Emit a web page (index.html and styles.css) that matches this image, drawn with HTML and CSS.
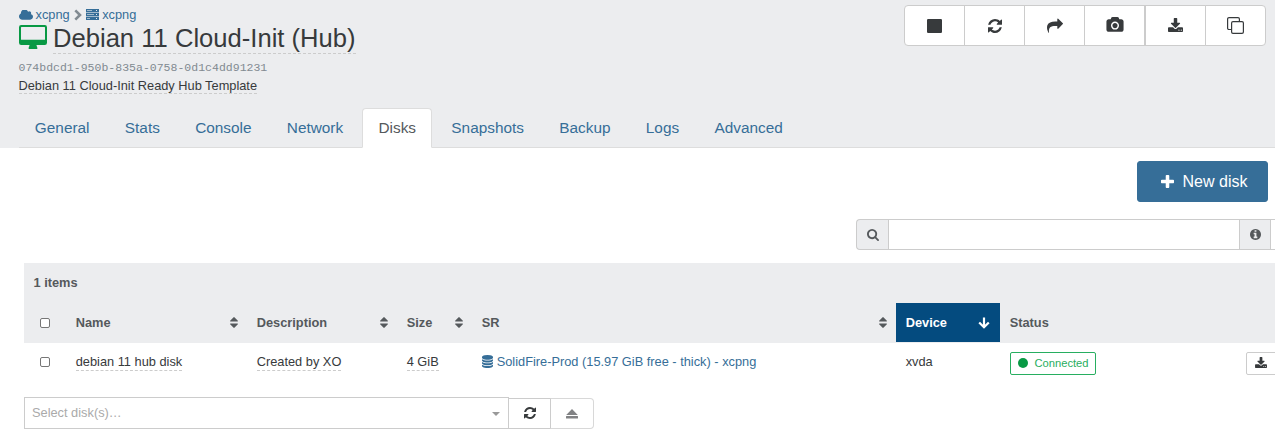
FILE: index.html
```
<!DOCTYPE html>
<html lang="en">
<head>
<meta charset="utf-8">
<title>Debian 11 Cloud-Init (Hub)</title>
<link rel="stylesheet" href="styles.css">
</head>
<body>
<svg class="defs" width="0" height="0">
  <symbol id="refresh" viewBox="0 0 1536 1536"><path d="M1511 928q0 5-1 7-64 268-268 434.500t-478 166.500q-146 0-282.500-55t-243.500-157l-129 129q-19 19-45 19t-45-19-19-45v-448q0-26 19-45t45-19h448q26 0 45 19t19 45-19 45l-137 137q71 66 161 102t187 36q134 0 250-65t186-179q11-17 53-117 8-23 30-23h192q13 0 22.500 9.500t9.500 22.500zm25-800v448q0 26-19 45t-45 19h-448q-26 0-45-19t-19-45 19-45l138-138q-148-137-349-137-134 0-250 65t-186 179q-11 17-53 117-8 23-30 23h-199q-13 0-22.500-9.500t-9.500-22.500v-7q65-268 270-434.500t480-166.500q146 0 284 55.500t245 156.500l130-129q19-19 45-19t45 19 19 45z"/></symbol>
  <symbol id="download" viewBox="64 0 1664 1536"><path d="M1344 1344q0-26-19-45t-45-19-45 19-19 45 19 45 45 19 45-19 19-45zm256 0q0-26-19-45t-45-19-45 19-19 45 19 45 45 19 45-19 19-45zm128-224v320q0 40-28 68t-68 28h-1472q-40 0-68-28t-28-68v-320q0-40 28-68t68-28h465l135 136q58 56 136 56t136-56l136-136h464q40 0 68 28t28 68zm-325-569q17 41-14 70l-448 448q-18 19-45 19t-45-19l-448-448q-31-29-14-70 17-39 59-39h256v-448q0-26 19-45t45-19h256q26 0 45 19t19 45v448h256q42 0 59 39z"/></symbol>
  <symbol id="sort" viewBox="384 192 1024 1408"><path d="M1408 1088q0 26-19 45l-448 448q-19 19-45 19t-45-19l-448-448q-19-19-19-45t19-45 45-19h896q26 0 45 19t19 45zm0-384q0 26-19 45t-45 19h-896q-26 0-45-19t-19-45 19-45l448-448q19-19 45-19t45 19l448 448q19 19 19 45z"/></symbol>
</svg>

<header class="header">
  <div class="heading">
    <nav class="crumbs">
      <svg class="cloud" viewBox="-64 256 1920 1280"><path d="M1856 1152q0 159-112.500 271.500t-271.500 112.500h-1088q-185 0-316.500-131.500t-131.500-316.500q0-132 71-241.500t187-163.500q-2-28-2-43 0-212 150-362t362-150q158 0 286.500 88t187.500 230q70-62 166-62 106 0 181 75t75 181q0 75-41 138 129 30 213 134.500t84 239.500z"/></svg>
      <a>xcpng</a>
      <svg class="chevron" viewBox="0 0 8 12"><path d="M1.300 1.300 6 6l-4.700 4.700"/></svg>
      <svg class="server" viewBox="0 0 13 11"><path fill-rule="evenodd" d="M0 0h13v3H0zM1 1v1h5V1zM10 1v1h1V1zM0 4h13v3H0zM1 5v1h7V5zM10 5v1h1V5zM0 8h13v3H0zM1 9v1h3V9zM10 9v1h1V9z"/><path class="shade" d="M1 1h5v1H1zM1 5h7v1H1zM1 9h3v1H1zM0 3h13v1H0zM0 7h13v1H0z"/></svg>
      <a>xcpng</a>
    </nav>
    <h1 class="title">
      <svg class="monitor" viewBox="0 0 28 24"><path fill-rule="evenodd" d="M2.200 0h23.600Q28 0 28 2.200v15.600q0 2.200-2.200 2.200H17.500q0 1 .7 2.200.8 1.800-.4 1.800h-7.600q-1.200 0-.4-1.800.7-1.200.7-2.200H2.200Q0 20 0 17.800V2.200Q0 0 2.200 0zM2 2.400v12q0 .4.400.4h23.200q.4 0 .4-.4v-12q0-.4-.4-.4H2.400Q2 2 2 2.400z"/></svg>
      <span class="editable">Debian 11 Cloud-Init (Hub)</span>
    </h1>
    <div class="uuid">074bdcd1-950b-835a-0758-0d1c4dd91231</div>
    <div class="summary"><span class="editable">Debian 11 Cloud-Init Ready Hub Template</span></div>
  </div>
  <div class="actions">
    <button><svg class="stop" viewBox="0 0 15 14"><path d="M.8 0h13.400l.8.800v12.400l-.8.800H.8L0 13.200V.8z"/></svg></button>
    <button><svg class="i14"><use href="#refresh"/></svg></button>
    <button><svg class="i16" viewBox="0 0 1792 1792"><path d="M1792 640q0 26-19 45l-512 512q-19 19-45 19t-45-19-19-45v-256h-224q-98 0-175.500 6t-154 21.500-133 42.500-105.500 69.500-80 101-48.500 138.500-17.500 181q0 55 5 123 0 6 2.500 23.500t2.500 26.500q0 15-8.500 25t-23.500 10q-16 0-28-17-7-9-13-22t-13.500-30-10.500-24q-127-285-127-451 0-199 53-333 162-403 875-403h224v-256q0-26 19-45t45-19 45 19l512 512q19 19 19 45z"/></svg></button>
    <button><svg class="camera" viewBox="-64 0 1920 1792"><path d="M896 672q119 0 203.500 84.500t84.500 203.500-84.500 203.500-203.500 84.500-203.500-84.500-84.500-203.500 84.500-203.500 203.500-84.500zm704-416q106 0 181 75t75 181v896q0 106-75 181t-181 75h-1408q-106 0-181-75t-75-181v-896q0-106 75-181t181-75h224l51-136q19-49 69.500-84.500t103.500-35.500h512q53 0 103.500 35.500t69.500 84.500l51 136h224zm-704 1152q185 0 316.500-131.500t131.500-316.500-131.500-316.500-316.500-131.500-316.500 131.500-131.500 316.500 131.500 316.500 316.500 131.500z"/></svg></button>
    <button class="thick"><svg class="save"><use href="#download"/></svg></button>
    <button><svg class="clone" viewBox="0 0 17 17"><path d="M4.500 12.500H2A1.400 1.400 0 0 1 .6 11V2A1.400 1.400 0 0 1 2 .6h9A1.400 1.400 0 0 1 12.400 2v2.500"/><rect x="4.600" y="4.600" width="11.800" height="11.800" rx="1.400"/></svg></button>
  </div>
  <nav class="tabs">
    <a>General</a><a>Stats</a><a>Console</a><a>Network</a><a class="active">Disks</a><a>Snapshots</a><a>Backup</a><a>Logs</a><a>Advanced</a>
  </nav>
</header>

<main>
  <div class="toolbar"><button class="new-disk"><svg viewBox="192 128 1408 1408"><path d="M1600 736v192q0 40-28 68t-68 28h-416v416q0 40-28 68t-68 28h-192q-40 0-68-28t-28-68v-416h-416q-40 0-68-28t-28-68v-192q0-40 28-68t68-28h416v-416q0-40 28-68t68-28h192q40 0 68 28t28 68v416h416q40 0 68 28t28 68z"/></svg>New disk</button></div>
  <div class="filter">
    <span class="addon first"><svg viewBox="64 128 1664 1664"><path d="M1216 832q0-185-131.500-316.500t-316.500-131.500-316.500 131.500-131.500 316.500 131.500 316.500 316.500 131.500 316.500-131.500 131.500-316.500zm512 832q0 52-38 90t-90 38q-54 0-90-38l-343-342q-179 124-399 124-143 0-273.500-55.500t-225-150-150-225-55.500-273.500 55.500-273.500 150-225 225-150 273.500-55.500 273.500 55.500 225 150 150 225 55.500 273.500q0 220-124 399l343 343q37 37 37 90z"/></svg></span>
    <input type="text" class="search">
    <span class="addon info"><svg viewBox="128 128 1536 1536"><path d="M1152 1376v-160q0-14-9-23t-23-9h-96v-512q0-14-9-23t-23-9h-320q-14 0-23 9t-9 23v160q0 14 9 23t23 9h96v320h-96q-14 0-23 9t-9 23v160q0 14 9 23t23 9h448q14 0 23-9t9-23zm-128-896v-160q0-14-9-23t-23-9h-192q-14 0-23 9t-9 23v160q0 14 9 23t23 9h192q14 0 23-9t9-23zm640 416q0 209-103 385.500t-279.500 279.500-385.500 103-385.500-103-279.500-279.500-103-385.500 103-385.500 279.500-279.500 385.500-103 385.500 103 279.500 279.500 103 385.500z"/></svg></span>
    <span class="more"></span>
  </div>

  <div class="table">
    <div class="count">1 items</div>
    <div class="row head">
      <div class="check"><input type="checkbox"></div>
      <div>Name<svg class="sort"><use href="#sort"/></svg></div>
      <div>Description<svg class="sort"><use href="#sort"/></svg></div>
      <div>Size<svg class="sort"><use href="#sort"/></svg></div>
      <div>SR<svg class="sort"><use href="#sort"/></svg></div>
      <div class="sorted">Device<svg class="arrow" viewBox="0 0 12 12"><path d="M6 .5v9.500M1.200 5.500 6 10.300l4.800-4.800"/></svg></div>
      <div>Status</div>
    </div>
    <div class="row body">
      <div class="check"><input type="checkbox"></div>
      <div><span class="editable">debian 11 hub disk</span></div>
      <div><span class="editable">Created by XO</span></div>
      <div><span class="editable">4 GiB</span></div>
      <div class="sr"><svg viewBox="128 0 1536 1792"><path d="M896 768q237 0 443-43t325-127v170q0 69-103 128t-280 93.500-385 34.500-385-34.500-280-93.500-103-128v-170q119 84 325 127t443 43zm0 768q237 0 443-43t325-127v170q0 69-103 128t-280 93.500-385 34.500-385-34.500-280-93.500-103-128v-170q119 84 325 127t443 43zm0-384q237 0 443-43t325-127v170q0 69-103 128t-280 93.500-385 34.500-385-34.500-280-93.500-103-128v-170q119 84 325 127t443 43zm0-1152q208 0 385 34.500t280 93.500 103 128v128q0 69-103 128t-280 93.500-385 34.500-385-34.500-280-93.500-103-128v-128q0-69 103-128t280-93.500 385-34.500z"/></svg><a>SolidFire-Prod (15.97 GiB free - thick) - xcpng</a></div>
      <div>xvda</div>
      <div class="status"><button class="connected"><i class="dot"></i>Connected</button><button class="export"><svg><use href="#download"/></svg></button></div>
    </div>
  </div>

  <div class="bulk">
    <div class="select">Select disk(s)…<i class="caret"></i></div>
    <button class="reload"><svg><use href="#refresh"/></svg></button>
    <button class="eject"><svg viewBox="0 0 12 10"><path d="M6 0l5.800 6H.2zM.5 7h11q.5 0 .5.500v1.500q0 .5-.5.500H.5Q0 9.500 0 9V7.500Q0 7 .5 7z"/></svg></button>
  </div>
</main>
</body>
</html>
```
FILE: styles.css
```
* { box-sizing: border-box; }
body {
  margin: 0;
  height: 438px;
  overflow: hidden;
  background: #fff;
  color: #373a3c;
  font: 12.8px/19.5px "Liberation Sans", Arial, sans-serif;
}
svg { fill: currentColor; flex: none; display: block; }
.defs { display: none; }
button { font: inherit; color: inherit; background: #fff; border: 1px solid #ccc; padding: 0; display: flex; align-items: center; justify-content: center; }
a { color: #366e98; }
.editable { border-bottom: 1px dashed #ccc; }

.header { display: grid; grid-template-columns: 1fr 362px; grid-template-rows: 108px 40px; background: #ecedef; padding: 0 9px 0 18.5px; height: 148px; }
.heading { padding-top: 5px; }
.crumbs { display: flex; align-items: center; height: 19px; color: #366e98; }
.cloud { width: 14px; height: 10px; margin-right: 3px; }
.chevron { width: 8px; height: 12px; margin: 0 4px 0 4px; fill: none; stroke: #818a91; stroke-width: 2.6; }
.server { width: 13px; height: 11px; margin-right: 3.5px; }
.shade { opacity: 0.4; }
.title { display: flex; align-items: flex-start; margin: 0; height: 34px; font-size: 25.6px; line-height: 29px; font-weight: 400; }
.title .editable { height: 30px; }
.monitor { width: 28px; height: 24px; margin: 1px 6.5px 0 0; color: #089944; }
.uuid { margin-top: 1px; color: #818a91; font: 11.52px/17px "Liberation Mono", monospace; height: 17px; }
.summary { display: flex; line-height: 20px; height: 19px; }
.summary .editable { height: 18px; }

.actions { display: flex; margin-top: 5px; height: 41px; }
.actions button { width: 61px; margin-right: -1px; flex: none; }
.actions button:first-child { border-radius: 4px 0 0 4px; }
.actions button:last-child { border-radius: 0 4px 4px 0; }
.actions .thick { margin-left: 1px; }
.stop { width: 15px; height: 14px; }
.i14 { width: 14px; height: 14px; }
.i16 { width: 16px; height: 16px; }
.save { width: 15px; height: 14px; margin: 0 1px 2px 0; }
.camera { width: 18px; height: 16px; margin-bottom: 1px; }
.clone { width: 17px; height: 17px; fill: none; stroke: currentColor; stroke-width: 1.2; }

.tabs { grid-column: 1 / -1; display: flex; margin-right: -9px; border-bottom: 1px solid #ddd; font-size: 15.36px; line-height: 22px; }
.tabs a { height: 40px; padding: 8px 15.36px; border: 1px solid transparent; margin-right: 2.6px; }
.tabs .active { color: #55595c; background: #fff; border-color: #ddd #ddd #fff; border-radius: 4px 4px 0 0; }

.toolbar { display: flex; justify-content: flex-end; padding: 13px 7px 0 0; }
.new-disk { width: 131px; height: 41px; background: #366e98; border-color: #366e98; border-radius: 3px; color: #fff; font-size: 16px; gap: 9px; padding-left: 3px; }
.new-disk svg { width: 13px; height: 13px; margin-bottom: 1px; }
.filter { display: flex; width: 419px; height: 31px; margin: 17px 0 0 auto; }
.addon { width: 32px; border: 1px solid #ccc; background: #ecedef; color: #55595c; display: flex; align-items: center; justify-content: center; }
.addon.first { border-radius: 4px 0 0 4px; border-right: 0; }
.addon svg { width: 12px; height: 12px; }
.addon.info { width: 31px; border-left: 0; }
.addon.info svg { width: 11px; height: 11px; }
.search { width: 352px; border: 1px solid #ccc; border-radius: 0; padding: 0; }
.more { flex: 1; border: 1px solid #ccc; border-width: 1px 0; }

.table { margin: 13px 0 0 24px; }
.count { height: 40px; padding: 10px 9.5px; background: #ecedef; color: #55595c; font-weight: 700; }
.row { display: grid; grid-template-columns: 42px 181px 150px 75px 424px 104px 1fr; height: 39px; }
.row > div { display: flex; align-items: center; padding: 0 9.7px; }
.row .check { justify-content: center; padding: 0; }
.row input { margin: 0; width: 10px; height: 10px; appearance: none; border: 1px solid #767676; border-radius: 2px; background: #fff; }
.head { height: 40px; padding-bottom: 1px; background: #ecedef; color: #55595c; font-weight: 700; }
.head svg { margin-left: auto; }
.head .sort { width: 8px; height: 11px; margin-right: -0.3px; }
.sorted { background: #044b7f; color: #fff; }
.arrow { width: 12px; height: 12px; fill: none; stroke: #fff; stroke-width: 2.2; }
.row.body > div { padding-bottom: 1px; }
.row .editable { height: 18px; line-height: 17px; margin-bottom: 1px; }
.sr svg { width: 11px; height: 13px; margin: 0 4px 1px 0; color: #366e98; }
.row.body > .status { padding: 1px 0 0 10px; }
.connected { width: 86px; height: 23px; border-color: #27ae60; border-radius: 2px; color: #27ae60; font-size: 11.2px; gap: 6px; padding: 1px 0 0 1px; }
.dot { width: 10px; height: 10px; border-radius: 50%; background: #089944; margin-bottom: 1px; }
.export { width: 40px; height: 23px; margin-left: auto; margin-right: -11px; border-radius: 2px 0 0 2px; padding-right: 11px; }
.export svg { width: 12px; height: 11px; margin-bottom: 1px; }

.bulk { display: flex; align-items: flex-end; margin: 15px 0 0 24px; }
.select { display: flex; align-items: center; justify-content: space-between; width: 485px; height: 32px; border: 1px solid #ccc; padding: 0 8px 0 7px; color: #aaa; }
.caret { border: 4px solid transparent; border-top-color: #999; border-bottom: 0; margin-top: 2px; }
.reload { width: 43px; height: 31px; margin-left: -1px; }
.reload svg { width: 12px; height: 12px; margin-bottom: 1px; }
.eject { width: 44px; height: 31px; margin-left: -1px; border-radius: 0 4px 4px 0; color: #818284; border-color: #d8d8d8 #d8d8d8 #d8d8d8 #ccc; }
.eject svg { width: 12px; height: 10px; }
```
